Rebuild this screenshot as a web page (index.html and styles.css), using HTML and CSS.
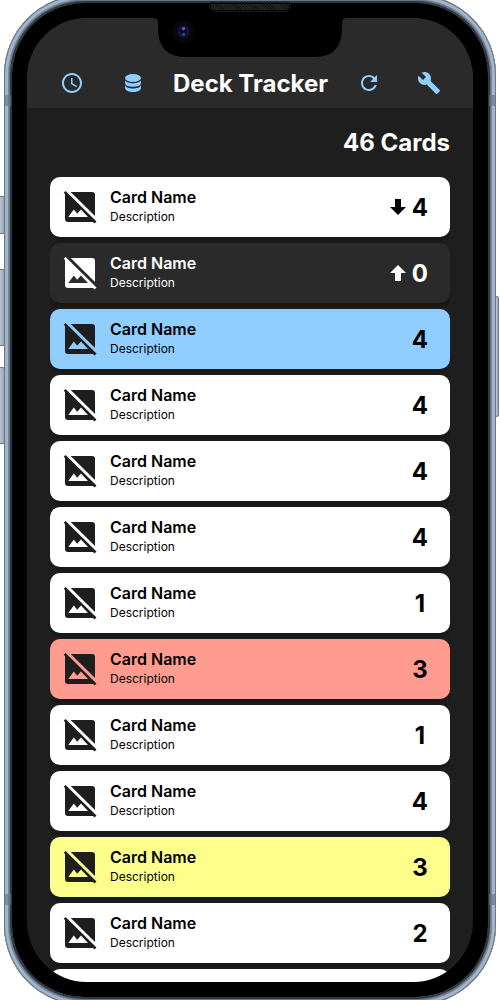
FILE: index.html
```
<!DOCTYPE html>
<html lang="en">
<head>
<meta charset="utf-8">
<title>Deck Tracker</title>
<link rel="stylesheet" href="styles.css">
</head>
<body>
<svg class="defs" width="0" height="0" aria-hidden="true">
  <symbol id="no-image" viewBox="0 0 40 40">
    <path fill-rule="evenodd" d="M3.7 5.8L5.6 3.9L36.5 34.4L34.5 36.4L33 35H8Q5 35 5 32V7.1ZM8.3 30H28L21 22.5L17.2 26.8L13.8 22.5Z"/>
    <path d="M10.7 5H32Q35 5 35 8V29Z"/>
  </symbol>
  <symbol id="down" viewBox="0 0 16 16"><path d="M5 0H11V8H16L8 16L0 8H5Z"/></symbol>
  <symbol id="up" viewBox="0 0 16 16"><path d="M5 16H11V8H16L8 0L0 8H5Z"/></symbol>
</svg>
<div class="stage">
  <i class="key key-mute"></i><i class="key key-up"></i><i class="key key-down"></i><i class="key key-power"></i>
  <div class="phone">
    <i class="band band-top"></i><i class="band band-bottom"></i>
    <div class="bezel">
      <main class="screen">
        <header class="bar">
          <svg class="icon" viewBox="0 0 24 24"><path d="M11.99 2C6.47 2 2 6.48 2 12s4.47 10 9.99 10C17.52 22 22 17.52 22 12S17.52 2 11.99 2zM12 20c-4.42 0-8-3.58-8-8s3.58-8 8-8 8 3.58 8 8-3.58 8-8 8zm.5-13H11v6l5.25 3.15.75-1.23-4.5-2.67z"/></svg>
          <svg class="icon" viewBox="0 0 24 24"><ellipse cx="12" cy="7" rx="8" ry="4"/><path d="M4 9.3C5.5 13.2 18.5 13.2 20 9.3V12.3C19.5 17 4.5 17 4 12.3ZM4 14.2C5.5 18.5 18.5 18.5 20 14.2V17C19.5 22.4 4.5 22.4 4 17Z"/></svg>
          <h1 class="title">Deck Tracker</h1>
          <svg class="icon" viewBox="0 0 24 24"><path d="M17.65 6.35C16.2 4.9 14.21 4 12 4c-4.42 0-7.99 3.58-7.99 8s3.57 8 7.99 8c3.73 0 6.84-2.55 7.73-6h-2.08c-.82 2.33-3.04 4-5.65 4-3.31 0-6-2.69-6-6s2.69-6 6-6c1.66 0 3.14.69 4.22 1.78L13 11h7V4l-2.35 2.35z"/></svg>
          <svg class="icon" viewBox="0 0 24 24"><path d="M22.7 19l-9.1-9.1c.9-2.3.4-5-1.5-6.9-2-2-5-2.4-7.4-1.3L9 6 6 9 1.6 4.7C.4 7.1.9 10.1 2.9 12.1c1.9 1.9 4.6 2.4 6.9 1.5l9.1 9.1c.4.4 1 .4 1.4 0l2.3-2.3c.5-.4.5-1.1.1-1.4z"/></svg>
        </header>
        <p class="total">46 Cards</p>
        <ul class="cards" id="cards"></ul>
      </main>
    </div>
    <svg class="notch" viewBox="0 0 194 41"><path d="M0 0V2Q5 2 5 7V14Q6 41 32 41H162Q188 41 189 14V7Q189 2 194 2V0Z"/></svg>
    <i class="speaker"></i>
    <i class="camera"></i>
  </div>
</div>
<script src="app.js"></script>
</body>
</html>
```
FILE: styles.css
```
* { box-sizing: border-box; }
body { margin: 0; background: #fff; font-family: Inter, "Liberation Sans", sans-serif; }
.defs { position: absolute; }
svg { fill: currentColor; display: block; flex: none; }
.stage { position: relative; width: 500px; height: 1000px; overflow: hidden; }
.phone {
  position: relative; width: 492px; height: 1010px; margin: -5px 4px 0; padding: 8px;
  border-radius: 80px;
  background: #9bacc0;
  box-shadow: inset 0 0 0 1px #67788a, inset 0 0 0 2px #a3b3c5, inset 0 0 1px 4px #a9b8c9, inset 0 0 1px 5px #73849a, inset 0 0 0 6px #647386, inset 0 0 0 8px #303840;
}
.bezel { height: 100%; padding: 15px; background: #000; border-radius: 72px; }
.screen { height: 964px; width: 446px; overflow: hidden; border-radius: 60px; background: #1e1e1e; }
.band { position: absolute; left: 0; right: 0; height: 11px; border: solid #65788a; border-width: 0 7px; opacity: .65; }
.band-top { top: 100px; }
.band-bottom { top: 899px; }
.key { position: absolute; left: -2px; width: 7px; border: 1px solid #66778b; border-radius: 2px; background: linear-gradient(90deg, #c2cad3, #99a9bb); }
.key-mute { top: 196px; height: 38px; }
.key-up { top: 269px; height: 77px; }
.key-down { top: 367px; height: 77px; }
.key-power { left: 495px; width: 4px; top: 296px; height: 121px; }
.notch { position: absolute; left: 149px; top: 21px; width: 194px; height: 41px; color: #000; }
.speaker {
  position: absolute; left: 205px; top: 7px; width: 82px; height: 10px;
  border: 2px solid #080808; border-radius: 2px 2px 6px 6px; outline: 1px solid #161616; outline-offset: -1px;
  background: repeating-linear-gradient(45deg, #262626 0 1px, #141414 1px 2px);
}
.camera {
  position: absolute; left: 168px; top: 25px; width: 23px; height: 23px; border-radius: 50%;
  background: radial-gradient(circle at 50% 38%, #6962b8 0 1px, transparent 2px), radial-gradient(circle at 50% 62%, #164a94 0 1px, transparent 2px), radial-gradient(circle, #090930 0 3px, #18184c 4px, #10102c 5.5px, #07060a 7px, #080508 11px);
}
.bar {
  display: grid; grid-template-columns: 24px 24px 1fr 24px 24px; column-gap: 37px; align-items: center;
  height: 90px; padding: 40px 32px 0 33px; background: #2a2a2a; color: #90ceff;
}
.bar .icon:nth-of-type(3) { margin-left: 1px; }
.icon { width: 24px; height: 24px; }
.title { margin: 2px -10px 0; color: #fff; font-size: 24px; line-height: 30px; font-weight: 700; text-align: center; white-space: nowrap; }
.total { margin: 0; padding: 20px 23px 0 0; height: 69px; color: #fff; text-align: right; font-size: 24px; line-height: 30px; font-weight: 700; }
.cards { display: grid; gap: 6px; margin: 0 23px; padding: 0; list-style: none; overflow: hidden; }
.card { display: flex; align-items: center; height: 60px; padding: 0 22px 0 10px; border-radius: 10px; background: #fff; color: #000; box-shadow: 0 4px 4px rgba(0, 0, 0, .25); }
.picture { width: 40px; height: 40px; color: #1e1e1e; }
.label { flex: 1; padding: 0 0 4px 10px; }
.name { font-size: 16px; line-height: 20px; font-weight: 600; }
.description { font-size: 12px; line-height: 15px; margin-top: 2px; }
.trend { width: 16px; height: 16px; margin-right: 6px; }
.count { min-width: 16px; padding-top: 2px; font-size: 24px; line-height: 30px; font-weight: 700; text-align: center; }
.card.dark { background: #2a2a2a; color: #fff; }
.card.dark .picture { color: #fff; }
.card.blue { background: #90ceff; }
.card.red { background: #ff9c8f; }
.card.yellow { background: #fdff8c; }
```
FILE: app.js
```
const cards = [
  [4, "", "down"], [0, "dark", "up"], [4, "blue"], [4], [4], [4], [1],
  [3, "red"], [1], [4], [3, "yellow"], [2]
];
document.getElementById("cards").innerHTML = cards.map(([count, tone = "", trend]) => `
  <li class="card ${tone}">
    <svg class="picture"><use href="#no-image"/></svg>
    <div class="label"><div class="name">Card Name</div><div class="description">Description</div></div>
    ${trend ? `<svg class="trend"><use href="#${trend}"/></svg>` : ""}
    <span class="count">${count}</span>
  </li>`).join("") + '<li class="card"></li>';
```
